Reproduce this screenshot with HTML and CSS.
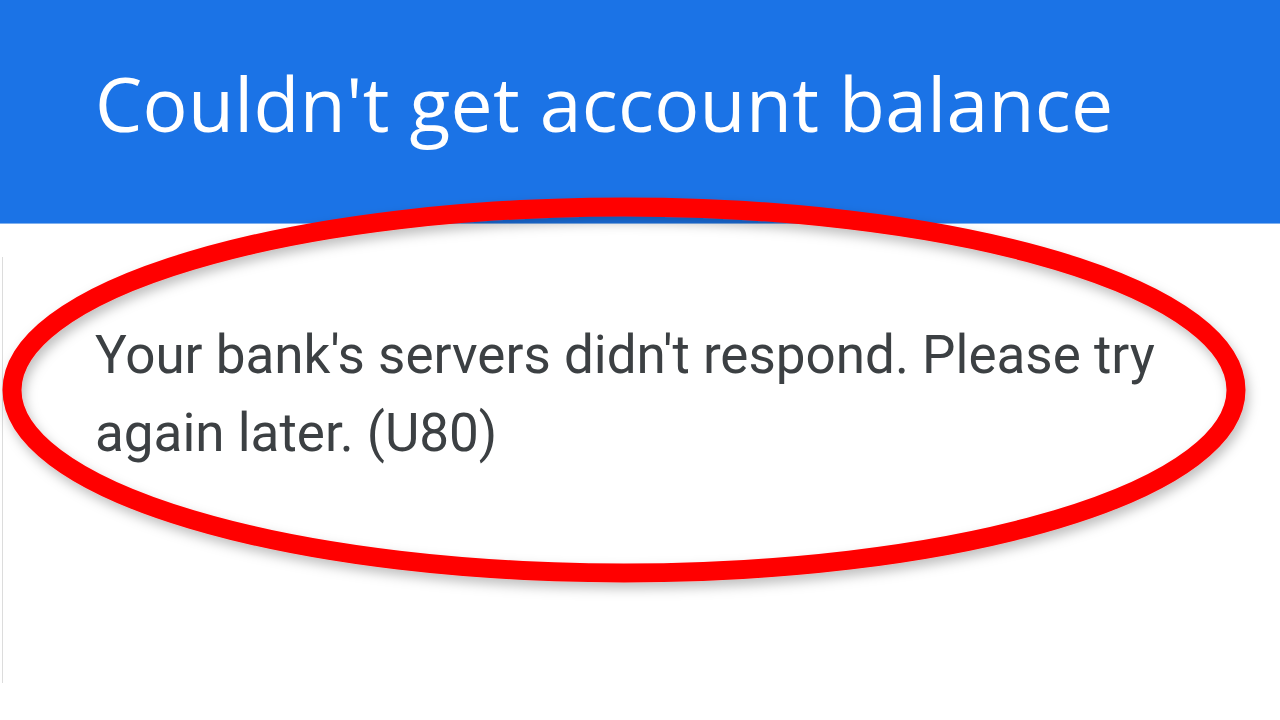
FILE: index.html
```html
<!DOCTYPE html>
<html>
    <head>
        <title>Couldn't get account balance</title>
        <link rel="stylesheet" href="styles.css">
    </head>
    <body>

        <div class="header">
            <h1 class="title">Couldn't get account balance</h1>
        </div>

        <div class="content">
            <p class="message">Your bank's servers didn't respond. Please try again later. (U80)</p>
        </div>

        <!-- red circle drawn over the screenshot -->
        <svg class="mark" width="1280" height="720" viewBox="0 0 1280 720">
            <defs>
                <filter id="shade" x="-10%" y="-20%" width="120%" height="140%">
                    <feDropShadow dx="3" dy="6" stdDeviation="6" flood-color="#000" flood-opacity="0.25"/>
                </filter>
            </defs>
            <ellipse cx="624" cy="390" rx="612" ry="183" fill="none" stroke="#ff0000" stroke-width="19" filter="url(#shade)"/>
        </svg>

    </body>
</html>
```

FILE: styles.css
```css
body {
    margin: 0;
    width: 1280px;
    height: 720px;
    overflow: hidden;
    background-color: #ffffff;
    position: relative;
}

.header {
    background-color: #1b73e6;
    height: 224px;
    border-bottom: 1px solid #7fb0ee;
    padding-left: 95px;
    box-sizing: border-box;
}

.title {
    margin: 0;
    padding-top: 55px;
    color: #ffffff;
    font-family: "Open Sans", sans-serif;
    font-weight: 400;
    font-size: 75px;
    line-height: 96px;
    letter-spacing: 0.3px;
}

.content {
    margin-top: 33px;
    margin-left: 2px;
    height: 426px;
    border-left: 1px solid #dcdcdc;
    padding-left: 92px;
    padding-top: 59px;
    box-sizing: border-box;
}

.message {
    margin: 0;
    width: 1120px;
    color: #3c4043;
    font-family: Roboto, sans-serif;
    font-size: 53px;
    line-height: 78px;
}

.mark {
    position: absolute;
    left: 0;
    top: 0;
}
```
